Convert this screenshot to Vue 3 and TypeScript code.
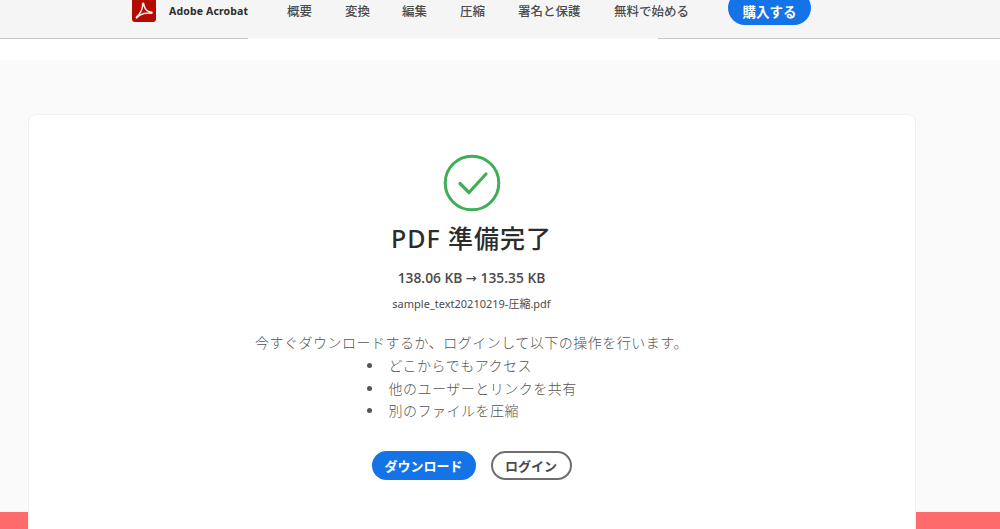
<script setup lang="ts">
const navItems: { label: string; width: number }[] = [
  { label: '概要', width: 58 },
  { label: '変換', width: 57 },
  { label: '編集', width: 58 },
  { label: '圧縮', width: 58 },
  { label: '署名と保護', width: 96 },
  { label: '無料で始める', width: 0 },
]
const bullets: string[] = ['どこからでもアクセス', '他のユーザーとリンクを共有', '別のファイルを圧縮']
</script>

<template>
  <div class="page">
    <header class="topbar">
      <div class="brand">
        <svg class="logo" viewBox="0 0 24 24" aria-hidden="true">
          <rect width="24" height="24" rx="3" fill="#b30b00" />
          <path
            d="M4.500 19c1.900-1.100 3.500-3.500 5-6.800.9-2.200 1.300-4.600 1.100-6.400 0-.8 1-.9 1.100 0 .4 2.900 2 5.900 4.200 7.400 1.100.7 2.800.7 3.700 1 .9.300.5 1.100-.3 1-3.600-.4-8 .2-11.400 2-1.100.7-2 1.700-2.800 2.500-.4.400-1.100.100-.6-.7Z"
            fill="none"
            stroke="#fde8e4"
            stroke-width="1.500"
            stroke-linejoin="round"
          />
        </svg>
        <span class="brand-name">Adobe Acrobat</span>
      </div>
      <nav class="nav">
        <a
          v-for="item in navItems"
          :key="item.label"
          class="nav-item"
          :style="item.width ? { width: item.width + 'px' } : undefined"
        >{{ item.label }}</a>
      </nav>
      <button class="buy" type="button">購入する</button>
    </header>
    <div class="rule">
      <span class="rule-left"></span>
      <span class="rule-right"></span>
    </div>
    <div class="gap"></div>
    <main class="stage">
      <section class="card">
        <svg class="check" viewBox="0 0 58 58" aria-hidden="true">
          <circle cx="29" cy="29" r="26.800" fill="none" stroke="#3fae56" stroke-width="3" />
          <path d="M17 29.500 26 38.500 43 20" fill="none" stroke="#3fae56" stroke-width="3.200" stroke-linecap="round" stroke-linejoin="round" />
        </svg>
        <h1 class="title">PDF 準備完了</h1>
        <p class="sizes">138.06 KB <span class="arrow">→</span> 135.35 KB</p>
        <p class="file">sample_text20210219-圧縮.pdf</p>
        <p class="lead">今すぐダウンロードするか、ログインして以下の操作を行います。</p>
        <ul class="list">
          <li v-for="b in bullets" :key="b">{{ b }}</li>
        </ul>
        <div class="actions">
          <button class="btn primary" type="button">ダウンロード</button>
          <button class="btn outline" type="button">ログイン</button>
        </div>
      </section>
    </main>
  </div>
</template>

<style>
html, body { margin: 0; background: #fff; overflow: hidden; }
</style>

<style scoped>
.page {
  width: 1000px;
  height: 529px;
  overflow: hidden;
  font-family: "Noto Sans", "Noto Sans CJK JP", sans-serif;
  background: #fff;
}
.topbar {
  height: 38px;
  box-sizing: border-box;
  display: flex;
  align-items: center;
  padding: 0 0 17px 132px;
  background: #f5f5f5;
}
.brand { display: flex; align-items: center; width: 155px; flex: none; }
.logo { width: 24px; height: 24px; margin-top: -2px; flex: none; }
.brand-name {
  margin-left: 13px;
  font-size: 10.500px;
  font-weight: 700;
  letter-spacing: 0.150px;
  color: #2c2c2c;
  white-space: nowrap;
}
.nav { display: flex; align-items: center; flex: none; }
.nav-item {
  font-size: 12.500px;
  color: #4b4b4b;
  white-space: nowrap;
  font-weight: 500;
}
.buy {
  align-self: flex-start;
  margin: -9px 0 0 39px;
  width: 83px;
  height: 34px;
  border: 0;
  padding: 6px 0 0;
  border-radius: 17px;
  background: #1473e6;
  color: #fff;
  font: 700 13.500px "Noto Sans CJK JP", sans-serif;
}
.rule { height: 1px; display: flex; justify-content: space-between; background: #fafafa; }
.rule-left { width: 248px; background: #c8c8c8; }
.rule-right { width: 342px; background: #c8c8c8; }
.gap { height: 21px; background: #fff; }
.stage {
  height: 469px;
  box-sizing: border-box;
  padding: 54px 84px 0 28px;
  background: linear-gradient(#fafafa 452px, #ff6a6d 452px);
}
.card {
  height: 460px;
  box-sizing: border-box;
  border: 1px solid #efefef;
  border-radius: 8px;
  background: #fff;
  display: flex;
  flex-direction: column;
  align-items: center;
  padding: 39px 1px 0 0;
}
.check { width: 58px; height: 58px; flex: none; }
.title {
  margin: 8px 0 0;
  font-size: 25px;
  line-height: 36px;
  font-weight: 500;
  letter-spacing: 1px;
  color: #2c2c2c;
}
.sizes {
  margin: 12px 0 0;
  font-family: "Open Sans", "Noto Sans CJK JP", sans-serif;
  font-size: 13.800px;
  line-height: 20px;
  font-weight: 600;
  color: #4b4b4b;
}
.arrow { font-size: 11px; }
.file {
  margin: 6px 0 0;
  font-size: 11px;
  line-height: 18px;
  color: #4b4b4b;
}
.lead {
  margin: 19px 0 0;
  font-size: 14px;
  line-height: 22px;
  font-weight: 300;
  letter-spacing: 0.500px;
  color: #555;
}
.list {
  margin: 1px 0 0;
  width: 240px;
  box-sizing: border-box;
  padding: 0 0 0 32px;
  font-size: 14px;
  line-height: 22.500px;
  font-weight: 300;
  letter-spacing: 0.500px;
  color: #555;
}
.list li { padding-left: 5px; white-space: nowrap; }
.actions { display: flex; gap: 15px; margin-top: 28px; }
.btn {
  height: 29px;
  box-sizing: border-box;
  border-radius: 15px;
  font: 700 13px "Noto Sans CJK JP", sans-serif;
  padding: 0;
}
.primary { width: 104px; border: 0; background: #1473e6; color: #fff; }
.outline { width: 81px; border: 2px solid #6e6e6e; background: #fff; color: #4b4b4b; }
</style>
